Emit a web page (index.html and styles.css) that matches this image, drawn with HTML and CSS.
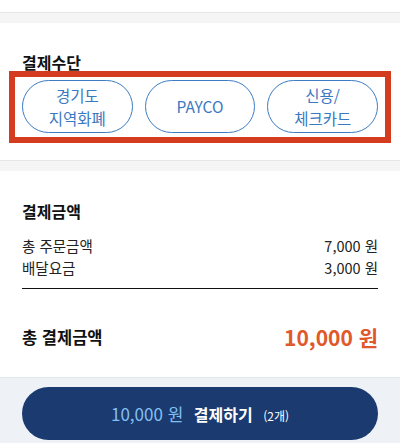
FILE: index.html
```html
<!DOCTYPE html>
<html lang="ko">
<head>
    <meta charset="UTF-8">
    <meta name="viewport" content="width=device-width, initial-scale=1.0">
    <title>결제</title>
    <link rel="stylesheet" href="styles.css">
</head>
<body>
    <div class="top-space"></div>
    <div class="divider-band"></div>

    <section class="section pay-method">
        <h2 class="section-title">결제수단</h2>
        <div class="method-box">
            <button class="method-btn" type="button">경기도<br>지역화폐</button>
            <button class="method-btn" type="button">PAYCO</button>
            <button class="method-btn" type="button">신용/<br>체크카드</button>
        </div>
    </section>

    <div class="divider-band"></div>

    <section class="section pay-amount">
        <h2 class="section-title">결제금액</h2>
        <ul class="amount-list">
            <li><span>총 주문금액</span><span>7,000 원</span></li>
            <li><span>배달요금</span><span>3,000 원</span></li>
        </ul>
        <div class="total-row">
            <span class="total-label">총 결제금액</span>
            <span class="total-price">10,000 원</span>
        </div>
    </section>

    <div class="bottom-bar">
        <button class="pay-btn" type="button">
            <span class="pay-price">10,000 원</span>
            <strong>결제하기</strong>
            <span class="pay-count">(2개)</span>
        </button>
    </div>
</body>
</html>
```

FILE: styles.css
```css
body {
    font-family: "Noto Sans CJK KR", "Noto Sans", sans-serif;
    margin: 0;
    padding: 0;
    background-color: #fff;
    color: #111;
}
.top-space {
    height: 12px;
}
.divider-band {
    height: 10px;
    border-top: 1px solid #e6e6e6;
    background-color: #f5f5f5;
}
.section {
    padding: 0 22px;
    background-color: #fff;
}
.section-title {
    margin: 0;
    font-size: 16px;
    font-weight: bold;
}
.pay-method {
    padding-top: 30px;
    padding-bottom: 17px;
}
.pay-method .section-title {
    line-height: 18px;
}
.method-box {
    display: grid;
    grid-template-columns: repeat(3, 1fr);
    gap: 12px;
    margin: 0 -13px;
    padding: 3px 7px 4px;
    border: 6px solid #d33c1f;
}
.method-btn {
    height: 53px;
    padding: 0;
    border: 1.5px solid #3d7cc3;
    border-radius: 27px;
    background-color: #fff;
    color: #3a78c0;
    font-family: inherit;
    font-size: 15.5px;
    line-height: 22.5px;
    cursor: pointer;
}
.pay-amount {
    padding-top: 29px;
    padding-bottom: 20px;
}
.pay-amount .section-title {
    line-height: 22px;
    margin-bottom: 13px;
}
.amount-list {
    list-style: none;
    margin: 0;
    padding: 0 0 9px;
    border-bottom: 1px solid #111;
}
.amount-list li {
    display: flex;
    justify-content: space-between;
    font-size: 14.5px;
    line-height: 22px;
    color: #222;
}
.total-row {
    display: flex;
    justify-content: space-between;
    align-items: center;
    height: 40px;
    margin-top: 28px;
}
.total-label {
    font-size: 16.5px;
    font-weight: bold;
}
.total-price {
    font-size: 21px;
    font-weight: bold;
    color: #e0582b;
}
.bottom-bar {
    padding: 9px 22px 3px;
    border-top: 1px solid #e2e6eb;
    background-color: #eef2f7;
}
.pay-btn {
    width: 100%;
    height: 53px;
    border: none;
    border-radius: 27px;
    background-color: #1a3a70;
    color: #fff;
    font-family: inherit;
    font-size: 16px;
    cursor: pointer;
}
.pay-price {
    color: #82c0f2;
    font-size: 17px;
}
.pay-btn strong {
    margin-left: 6px;
}
.pay-count {
    margin-left: 6px;
    font-size: 12px;
}
```
